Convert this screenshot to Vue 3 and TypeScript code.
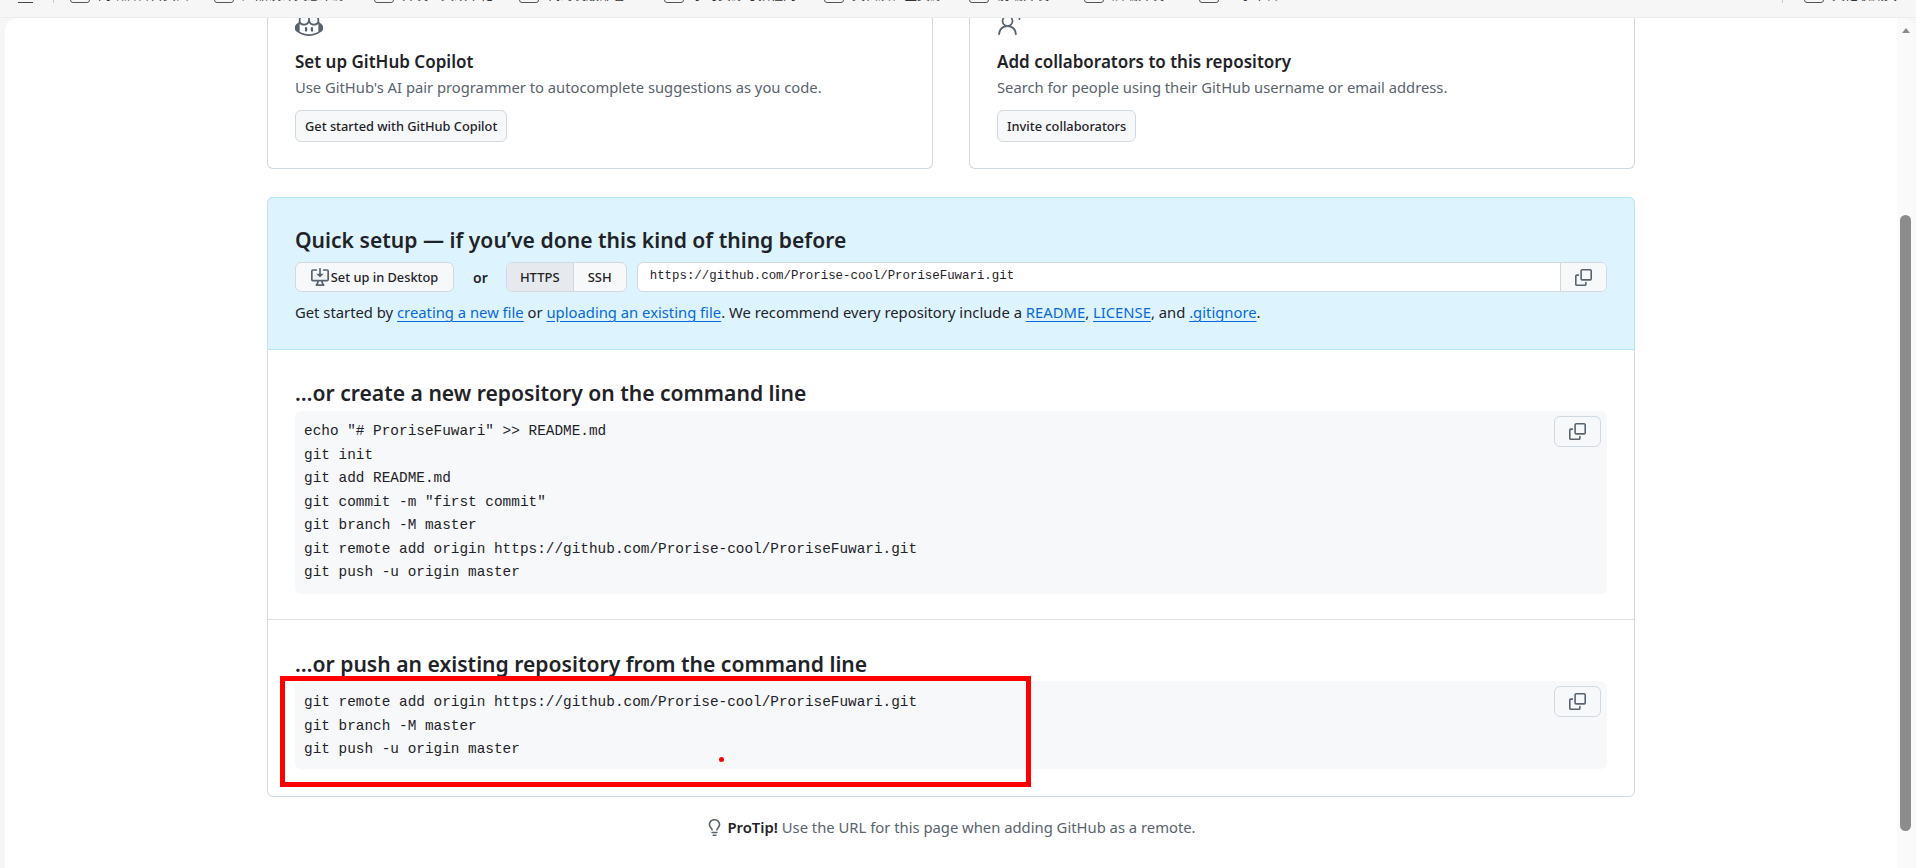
<script setup lang="ts">
interface Mark { label: string; width: number }
const marks: Mark[] = [
  { label: '网站后台首页面', width: 144 },
  { label: '产品设计灵感来源', width: 160 },
  { label: '开发工具效率化', width: 145 },
  { label: '代码发版部署', width: 145 },
  { label: '学习资源与教程网', width: 160 },
  { label: '文档及社区资源', width: 145 },
  { label: '前端开发', width: 115 },
  { label: '后端开发', width: 115 },
  { label: '显示平台', width: 100 }
]
const createLines = [
  'echo "# ProriseFuwari" >> README.md',
  'git init',
  'git add README.md',
  'git commit -m "first commit"',
  'git branch -M master',
  'git remote add origin https://github.com/Prorise-cool/ProriseFuwari.git',
  'git push -u origin master'
]
const pushLines = [
  'git remote add origin https://github.com/Prorise-cool/ProriseFuwari.git',
  'git branch -M master',
  'git push -u origin master'
]
</script>

<template>
  <div class="screen">
    <header class="bookmarks">
      <span class="apps"></span>
      <span class="sep"></span>
      <span v-for="m in marks" :key="m.label" class="mark" :style="{ width: m.width + 'px' }">
        <span class="folder"></span>{{ m.label }}
      </span>
      <span class="spacer"></span>
      <span class="sep right"></span>
      <span class="mark"><span class="folder"></span>其他收藏夹</span>
    </header>

    <div class="window">
      <main class="page">
        <div class="container">
          <div class="cards">
            <section class="card">
              <div class="card-icon">
                <svg width="28" height="18" viewBox="0 6.6 24 15.43" fill="#59636e">
                  <path d="M23.922 16.992c-.861 1.495-5.859 5.023-11.922 5.023-6.063 0-11.061-3.528-11.922-5.023A.641.641 0 0 1 0 16.736v-2.869a.841.841 0 0 1 .053-.22c.372-.935 1.347-2.292 2.605-2.656.167-.429.414-1.055.644-1.517a10.195 10.195 0 0 1-.052-1.086c0-1.331.282-2.499 1.132-3.368.397-.406.89-.717 1.474-.952 1.399-1.136 3.392-2.093 6.122-2.093 2.731 0 4.767.957 6.166 2.093.584.235 1.077.546 1.474.952.85.869 1.132 2.037 1.132 3.368 0 .368-.014.733-.052 1.086.23.462.477 1.088.644 1.517 1.258.364 2.233 1.721 2.605 2.656a.832.832 0 0 1 .053.22v2.869a.641.641 0 0 1-.078.256ZM12.172 11h-.344a4.323 4.323 0 0 1-.355.508C10.703 12.455 9.555 13 7.965 13c-1.725 0-2.989-.359-3.782-1.259a2.005 2.005 0 0 1-.085-.104L4 11.741v6.585c1.435.779 4.514 2.179 8 2.179 3.486 0 6.565-1.4 8-2.179v-6.585l-.098-.104s-.033.045-.085.104c-.793.9-2.057 1.259-3.782 1.259-1.59 0-2.738-.545-3.508-1.492a4.323 4.323 0 0 1-.355-.508h-.016.016Zm.641-2.935c.136 1.057.403 1.913.878 2.497.442.544 1.134.938 2.344.938 1.573 0 2.292-.337 2.657-.751.384-.435.558-1.15.558-2.361 0-1.14-.243-1.847-.705-2.319-.477-.488-1.319-.862-2.824-1.025-1.487-.161-2.192.138-2.533.529-.269.307-.437.808-.438 1.578v.021c0 .265.021.562.063.893Zm-1.626 0c.042-.331.063-.628.063-.894v-.02c-.001-.77-.169-1.271-.438-1.578-.341-.391-1.046-.69-2.533-.529-1.505.163-2.347.537-2.824 1.025-.462.472-.705 1.179-.705 2.319 0 1.211.175 1.926.558 2.361.365.414 1.084.751 2.657.751 1.21 0 1.902-.394 2.344-.938.475-.584.742-1.44.878-2.497Z"/>
                  <path d="M14.5 14.25a1 1 0 0 1 1 1v2a1 1 0 0 1-2 0v-2a1 1 0 0 1 1-1Zm-5 0a1 1 0 0 1 1 1v2a1 1 0 0 1-2 0v-2a1 1 0 0 1 1-1Z"/>
                </svg>
              </div>
              <h3 class="card-title">Set up GitHub Copilot</h3>
              <p class="card-text">Use GitHub's AI pair programmer to autocomplete suggestions as you code.</p>
              <button class="btn">Get started with GitHub Copilot</button>
            </section>
            <section class="card">
              <div class="card-icon">
                <svg width="28" height="18" viewBox="0 6.86 24 15.43" fill="#59636e">
                  <path d="M4 9.5a5 5 0 1 1 7.916 4.062 7.973 7.973 0 0 1 5.018 7.166.75.75 0 1 1-1.499.044 6.469 6.469 0 0 0-12.932 0 .75.75 0 0 1-1.499-.044 7.972 7.972 0 0 1 5.059-7.181A4.994 4.994 0 0 1 4 9.5ZM9 6a3.5 3.5 0 1 0 0 7 3.5 3.5 0 0 0 0-7Zm10.25-5a.75.75 0 0 1 .75.75V4h2.25a.75.75 0 0 1 0 1.5H20v2.25a.75.75 0 0 1-1.5 0V5.5h-2.25a.75.75 0 0 1 0-1.5h2.25V1.75a.75.75 0 0 1 .75-.75Z"/>
                </svg>
              </div>
              <h3 class="card-title">Add collaborators to this repository</h3>
              <p class="card-text">Search for people using their GitHub username or email address.</p>
              <button class="btn">Invite collaborators</button>
            </section>
          </div>

          <div class="setup">
            <section class="quick">
              <h2 class="heading">Quick setup — if you’ve done this kind of thing before</h2>
              <div class="clone-row">
                <button class="btn tall desktop">
                  <svg width="18" height="18" viewBox="0 0 16 16" fill="#59636e">
                    <path d="m4.927 5.427 2.896 2.896a.25.25 0 0 0 .354 0l2.896-2.896A.25.25 0 0 0 10.896 5H8.75V.75a.75.75 0 1 0-1.5 0V5H5.104a.25.25 0 0 0-.177.427Z"/>
                    <path d="M1.573 2.573a.25.25 0 0 0-.073.177v7.5a.25.25 0 0 0 .25.25h12.5a.25.25 0 0 0 .25-.25v-7.5a.25.25 0 0 0-.25-.25h-3a.75.75 0 0 1 0-1.5h3A1.75 1.75 0 0 1 16 2.75v7.5A1.75 1.75 0 0 1 14.25 12h-3.727c.099 1.041.52 1.872 1.292 2.757A.75.75 0 0 1 11.25 16h-6.5a.75.75 0 0 1-.565-1.243c.772-.885 1.192-1.716 1.292-2.757H1.75A1.75 1.75 0 0 1 0 10.25v-7.5A1.75 1.75 0 0 1 1.75 1h3a.75.75 0 0 1 0 1.5h-3a.25.25 0 0 0-.177.073ZM6.982 12a5.72 5.72 0 0 1-.765 2.5h3.566a5.72 5.72 0 0 1-.765-2.5H6.982Z"/>
                  </svg>
                  Set up in Desktop
                </button>
                <span class="or">or</span>
                <div class="segment">
                  <span class="seg on">HTTPS</span>
                  <span class="seg">SSH</span>
                </div>
                <div class="url">
                  <span class="url-text">https://github.com/Prorise-cool/ProriseFuwari.git</span>
                  <span class="url-copy">
                    <svg width="17" height="17" viewBox="0 0 16 16" fill="#59636e">
                      <path d="M0 6.75C0 5.784.784 5 1.75 5h1.5a.75.75 0 0 1 0 1.5h-1.5a.25.25 0 0 0-.25.25v7.5c0 .138.112.25.25.25h7.5a.25.25 0 0 0 .25-.25v-1.5a.75.75 0 0 1 1.5 0v1.5A1.75 1.75 0 0 1 9.25 16h-7.5A1.75 1.75 0 0 1 0 14.25Z"/>
                      <path d="M5 1.75C5 .784 5.784 0 6.75 0h7.5C15.216 0 16 .784 16 1.75v7.5A1.75 1.75 0 0 1 14.25 11h-7.5A1.75 1.75 0 0 1 5 9.25Zm1.75-.25a.25.25 0 0 0-.25.25v7.5c0 .138.112.25.25.25h7.5a.25.25 0 0 0 .25-.25v-7.5a.25.25 0 0 0-.25-.25Z"/>
                    </svg>
                  </span>
                </div>
              </div>
              <p class="hint">Get started by <a>creating a new file</a> or <a>uploading an existing file</a>. We recommend every repository include a <a>README</a>, <a>LICENSE</a>, and <a>.gitignore</a>.</p>
            </section>

            <section class="block create">
              <h2 class="heading">…or create a new repository on the command line</h2>
              <div class="code">
                <div v-for="l in createLines" :key="l" class="line">{{ l }}</div>
                <button class="code-copy">
                  <svg width="17" height="17" viewBox="0 0 16 16" fill="#59636e">
                    <path d="M0 6.75C0 5.784.784 5 1.75 5h1.5a.75.75 0 0 1 0 1.5h-1.5a.25.25 0 0 0-.25.25v7.5c0 .138.112.25.25.25h7.5a.25.25 0 0 0 .25-.25v-1.5a.75.75 0 0 1 1.5 0v1.5A1.75 1.75 0 0 1 9.25 16h-7.5A1.75 1.75 0 0 1 0 14.25Z"/>
                    <path d="M5 1.75C5 .784 5.784 0 6.75 0h7.5C15.216 0 16 .784 16 1.75v7.5A1.75 1.75 0 0 1 14.25 11h-7.5A1.75 1.75 0 0 1 5 9.25Zm1.75-.25a.25.25 0 0 0-.25.25v7.5c0 .138.112.25.25.25h7.5a.25.25 0 0 0 .25-.25v-7.5a.25.25 0 0 0-.25-.25Z"/>
                  </svg>
                </button>
              </div>
            </section>

            <section class="block push">
              <h2 class="heading">…or push an existing repository from the command line</h2>
              <div class="code">
                <div v-for="l in pushLines" :key="l" class="line">{{ l }}</div>
                <button class="code-copy">
                  <svg width="17" height="17" viewBox="0 0 16 16" fill="#59636e">
                    <path d="M0 6.75C0 5.784.784 5 1.75 5h1.5a.75.75 0 0 1 0 1.5h-1.5a.25.25 0 0 0-.25.25v7.5c0 .138.112.25.25.25h7.5a.25.25 0 0 0 .25-.25v-1.5a.75.75 0 0 1 1.5 0v1.5A1.75 1.75 0 0 1 9.25 16h-7.5A1.75 1.75 0 0 1 0 14.25Z"/>
                    <path d="M5 1.75C5 .784 5.784 0 6.75 0h7.5C15.216 0 16 .784 16 1.75v7.5A1.75 1.75 0 0 1 14.25 11h-7.5A1.75 1.75 0 0 1 5 9.25Zm1.75-.25a.25.25 0 0 0-.25.25v7.5c0 .138.112.25.25.25h7.5a.25.25 0 0 0 .25-.25v-7.5a.25.25 0 0 0-.25-.25Z"/>
                  </svg>
                </button>
              </div>
            </section>
          </div>

          <p class="protip">
            <svg width="17" height="17" viewBox="0 0 16 16" fill="#59636e">
              <path d="M8 1.5c-2.363 0-4 1.69-4 3.75 0 .984.424 1.625.984 2.304l.214.253c.223.264.47.556.673.848.284.411.537.896.621 1.49a.75.75 0 0 1-1.484.211c-.04-.282-.163-.547-.37-.847a8.456 8.456 0 0 0-.542-.68c-.084-.1-.173-.205-.268-.32C3.201 7.75 2.5 6.766 2.5 5.25 2.5 2.31 4.863 0 8 0s5.5 2.31 5.5 5.25c0 1.516-.701 2.5-1.328 3.259-.095.115-.184.22-.268.319-.207.245-.383.453-.541.681-.208.3-.33.565-.37.847a.751.751 0 0 1-1.485-.212c.084-.593.337-1.078.621-1.489.203-.292.45-.584.673-.848.075-.088.147-.173.213-.253.561-.679.985-1.32.985-2.304 0-2.06-1.637-3.75-4-3.75ZM5.75 12h4.5a.75.75 0 0 1 0 1.5h-4.5a.75.75 0 0 1 0-1.5ZM6 15.25a.75.75 0 0 1 .75-.75h2.5a.75.75 0 0 1 0 1.5h-2.5a.75.75 0 0 1-.75-.75Z"/>
            </svg>
            <strong>ProTip!</strong>
            <span>Use the URL for this page when adding GitHub as a remote.</span>
          </p>
        </div>
      </main>
      <aside class="scrollbar">
        <span class="arrow"></span>
        <span class="thumb"></span>
      </aside>
    </div>

    <div class="redbox"></div>
    <div class="reddot"></div>
  </div>
</template>

<style scoped>
.screen {
  position: relative;
  width: 1916px;
  height: 868px;
  overflow: hidden;
  display: flex;
  flex-direction: column;
  background: #f6f6f6;
  font-family: "Noto Sans", "Noto Sans CJK SC", sans-serif;
  color: #1f2328;
  font-size: 14px;
}
.bookmarks {
  flex: none;
  height: 18px;
  box-sizing: border-box;
  padding: 0 19px 14px 18px;
  display: flex;
  align-items: flex-end;
  overflow: hidden;
  border-bottom: 1px solid #ececec;
}
.apps {
  width: 15px;
  height: 1px;
  background: #444;
  margin-right: 20px;
  flex: none;
}
.sep {
  width: 1px;
  height: 5px;
  background: #c9c9c9;
  margin-right: 16px;
  flex: none;
}
.sep.right { margin-right: 21px; }
.spacer { flex: 1; }
.mark {
  display: flex;
  align-items: flex-end;
  flex: none;
  font-size: 13px;
  line-height: 18px;
  color: #333;
  white-space: nowrap;
  font-family: "Noto Sans CJK SC", sans-serif;
}
.folder {
  width: 20px;
  height: 14px;
  border: 1.5px solid #555;
  border-radius: 3px;
  margin-right: 8px;
  box-sizing: border-box;
  flex: none;
}
.window {
  flex: 1;
  min-height: 0;
  display: flex;
  margin: 0 2px 0 5px;
  background: #fff;
  border-radius: 12px 12px 0 0;
  overflow: hidden;
}
.page { flex: 1; min-width: 0; }
.container { width: 1368px; margin: 0 auto; }
.cards {
  display: grid;
  grid-template-columns: 666px 666px;
  justify-content: space-between;
}
.card {
  height: 151px;
  box-sizing: border-box;
  padding: 0 27px;
  border: 1px solid #d1d9e0;
  border-top: 0;
  border-radius: 0 0 6px 6px;
}
.card-icon { height: 18px; display: flex; align-items: flex-end; }
.card-title {
  margin: 15px 0 0;
  font-size: 17px;
  line-height: 22px;
  font-weight: 600;
}
.card-text {
  margin: 3px 0 0;
  font-size: 14.75px;
  line-height: 22px;
  color: #59636e;
}
.btn {
  display: inline-flex;
  align-items: center;
  justify-content: center;
  height: 32px;
  box-sizing: border-box;
  margin-top: 12px;
  padding: 0 9px;
  font: 500 12.8px/20px "Noto Sans", sans-serif;
  color: #1f2328;
  background: #f6f8fa;
  border: 1px solid #d1d9e0;
  border-radius: 6px;
}
.setup {
  margin-top: 28px;
  border: 1px solid #d1d9e0;
  border-radius: 6px;
  height: 600px;
  box-sizing: border-box;
}
.quick {
  margin: -1px -1px 0;
  height: 153px;
  box-sizing: border-box;
  padding: 30px 27px 0;
  background: #ddf4ff;
  border: 1px solid #b6e3ff;
  border-radius: 6px 6px 0 0;
}
.heading {
  margin: 0;
  font-size: 21.1px;
  line-height: 24px;
  font-weight: 600;
}
.clone-row { display: flex; align-items: center; margin-top: 10px; height: 30px; }
.btn.tall { height: 30px; margin: 0; width: 159px; gap: 2px; padding: 0; }
.or { margin: 0 18px 0 19px; font-weight: 600; font-size: 14px; color: #1f2328; }
.segment {
  display: flex;
  height: 30px;
  box-sizing: border-box;
  border: 1px solid #d1d9e0;
  border-radius: 6px;
  overflow: hidden;
  background: #f6f8fa;
  font-size: 13px;
  font-weight: 500;
  margin-right: 10px;
}
.seg { display: flex; align-items: center; justify-content: center; width: 52px; }
.seg.on { width: 66px; background: #e6eaef; border-right: 1px solid #d1d9e0; }
.url {
  flex: 1;
  display: flex;
  height: 30px;
  box-sizing: border-box;
  border: 1px solid #d1d9e0;
  border-radius: 6px;
  overflow: hidden;
  background: #fff;
}
.url-text {
  flex: 1;
  padding-left: 12px;
  font: 12.4px/26px "Liberation Mono", monospace;
}
.url-copy {
  width: 45px;
  display: flex;
  align-items: center;
  justify-content: center;
  background: #f6f8fa;
  border-left: 1px solid #d1d9e0;
}
.hint { margin: 9px 0 0; font-size: 14.8px; line-height: 22px; }
.hint a {
  color: #0969da;
  text-decoration: underline;
  text-underline-offset: 3px;
}
.block { box-sizing: border-box; padding: 0 27px; }
.create { height: 270px; padding-top: 31px; border-bottom: 1px solid #d8dee4; }
.push { height: 176px; padding-top: 32px; }
.code {
  position: relative;
  margin-top: 6px;
  padding: 9px 9px 0;
  box-sizing: border-box;
  background: #f6f8fa;
  border-radius: 6px;
}
.create .code { height: 183px; }
.push .code { height: 88px; margin-top: 5px; padding-top: 10px; }
.line {
  font: 14.4px/23.5px "Liberation Mono", monospace;
  color: #1f2328;
  white-space: pre;
}
.code-copy {
  position: absolute;
  top: 5px;
  right: 6px;
  width: 47px;
  height: 31px;
  padding: 0;
  display: flex;
  align-items: center;
  justify-content: center;
  background: #f6f8fa;
  border: 1px solid #d1d9e0;
  border-radius: 6px;
}
.protip {
  margin: 20px 0 0;
  display: flex;
  align-items: center;
  justify-content: center;
  gap: 4px;
  font-size: 14.8px;
  line-height: 20px;
  color: #59636e;
}
.protip strong { color: #1f2328; font-weight: 600; }
.scrollbar {
  flex: none;
  width: 17px;
  display: flex;
  flex-direction: column;
  align-items: center;
  background: #fafafa;
}
.arrow {
  margin-top: 10px;
  width: 0;
  height: 0;
  border-left: 4.5px solid transparent;
  border-right: 4.5px solid transparent;
  border-bottom: 5px solid #8c8c8c;
}
.thumb {
  margin-top: 182px;
  width: 11px;
  height: 616px;
  border-radius: 6px;
  background: #8c8c8c;
}
.redbox {
  position: absolute;
  left: 280px;
  top: 676px;
  width: 751px;
  height: 111px;
  box-sizing: border-box;
  border: 5px solid #f00;
}
.reddot {
  position: absolute;
  left: 719px;
  top: 757px;
  width: 5px;
  height: 5px;
  border-radius: 50%;
  background: #f00;
}
</style>
